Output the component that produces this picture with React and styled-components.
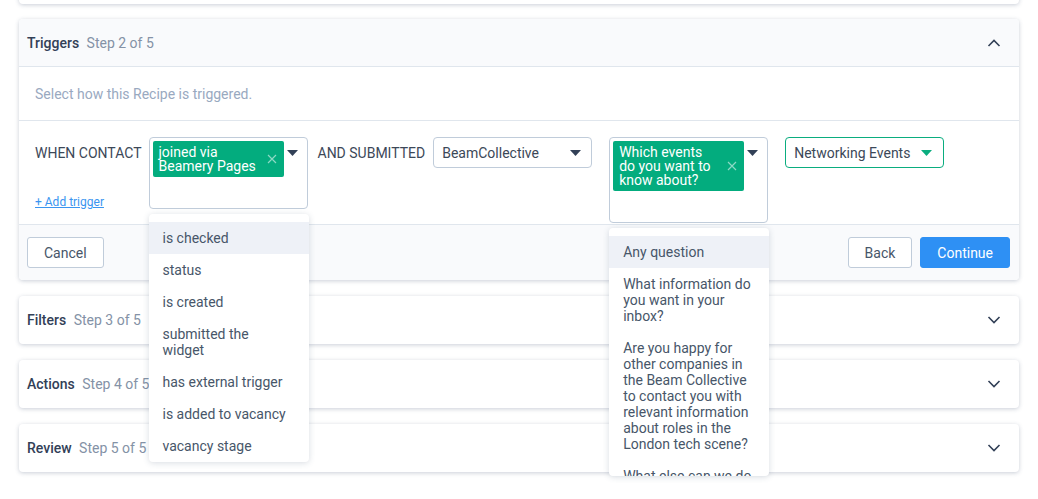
import React from "react";
import styled, { createGlobalStyle, css } from "styled-components";

const GlobalStyle = createGlobalStyle`
  body {
    margin: 0;
    background: #ffffff;
    font-family: Roboto, "Liberation Sans", sans-serif;
    color: #3c4858;
  }
  * {
    box-sizing: border-box;
  }
`;

const triggerOptions = [
  "is checked",
  "status",
  "is created",
  "submitted the widget",
  "has external trigger",
  "is added to vacancy",
  "vacancy stage",
];

const questionOptions = [
  "Any question",
  "What information do you want in your inbox?",
  "Are you happy for other companies in the Beam Collective to contact you with relevant information about roles in the London tech scene?",
  "What else can we do for you?",
];

const steps = [
  { title: "Filters", step: 3 },
  { title: "Actions", step: 4 },
  { title: "Review", step: 5 },
];

const Caret = ({ color = "#324057" }) => (
  <svg width="11" height="6" viewBox="0 0 11 6">
    <path d="M0 0 L11 0 L5.5 6 Z" fill={color} />
  </svg>
);

const Chevron = ({ up }) => (
  <svg width="14" height="8" viewBox="0 0 14 8">
    <path
      d={up ? "M1.5 7 L7 1.5 L12.5 7" : "M1.5 1 L7 6.5 L12.5 1"}
      fill="none"
      stroke="#324057"
      strokeWidth="1.6"
    />
  </svg>
);

const Cross = () => (
  <svg width="10" height="10" viewBox="0 0 10 10">
    <path d="M1 1 L9 9 M9 1 L1 9" stroke="rgba(255,255,255,0.55)" strokeWidth="1.2" />
  </svg>
);

const MultiSelect = ({ tag, options }) => (
  <MultiWrap>
    <MultiBox>
      <Tag>
        <TagText>{tag}</TagText>
        <Cross />
      </Tag>
      <MultiInput />
      <CaretSlot>
        <Caret />
      </CaretSlot>
    </MultiBox>
    <Menu>
      {options.map((o, i) => (
        <MenuItem key={o} $active={i === 0}>
          {o}
        </MenuItem>
      ))}
    </Menu>
  </MultiWrap>
);

const App = () => {
  return (
    <>
      <GlobalStyle />
      <Page>
        <PrevCard />
        <Card>
          <Header $open>
            <HeaderTitle>
              Triggers <StepText>Step 2 of 5</StepText>
            </HeaderTitle>
            <Chevron up />
          </Header>
          <Description>Select how this Recipe is triggered.</Description>
          <TriggerRow>
            <LabelColumn>
              <Label>WHEN CONTACT</Label>
              <AddLink href="#">+ Add trigger</AddLink>
            </LabelColumn>
            <MultiSelect tag="joined via Beamery Pages" options={triggerOptions} />
            <Label $gap>AND SUBMITTED</Label>
            <Select>
              <span>BeamCollective</span>
              <Caret />
            </Select>
            <Spacer />
            <MultiSelect
              tag="Which events do you want to know about?"
              options={questionOptions}
            />
            <Spacer />
            <Select $accent>
              <span>Networking Events</span>
              <Caret color="#0aad7f" />
            </Select>
          </TriggerRow>
          <Footer>
            <Button>Cancel</Button>
            <FooterRight>
              <Button>Back</Button>
              <Button $primary>Continue</Button>
            </FooterRight>
          </Footer>
        </Card>
        {steps.map((s) => (
          <Card key={s.title}>
            <Header>
              <HeaderTitle>
                {s.title} <StepText>Step {s.step} of 5</StepText>
              </HeaderTitle>
              <Chevron />
            </Header>
          </Card>
        ))}
      </Page>
    </>
  );
};

export default App;

const Page = styled.div`
  padding: 0 19px 30px;
  display: flex;
  flex-direction: column;
  gap: 16px;
`;

const Card = styled.div`
  background: #ffffff;
  border-radius: 4px;
  box-shadow: 0 1px 4px rgba(60, 80, 110, 0.28);
`;

const PrevCard = styled(Card)`
  height: 48px;
  margin-top: -44px;
  margin-bottom: -1px;
`;

const Header = styled.div`
  height: 48px;
  display: flex;
  align-items: center;
  justify-content: space-between;
  padding: 0 18px 0 8px;
  border-radius: 4px;
  ${(p) =>
    p.$open &&
    css`
      background: #f9fafc;
      border-bottom: 1px solid #e0e6ed;
      border-radius: 4px 4px 0 0;
    `}
`;

const HeaderTitle = styled.div`
  font-size: 14px;
  font-weight: 500;
  color: #324057;
`;

const StepText = styled.span`
  margin-left: 4px;
  font-weight: 400;
  color: #8492a6;
`;

const Description = styled.div`
  height: 54px;
  display: flex;
  align-items: center;
  padding: 0 16px;
  font-size: 14px;
  color: #99a9bf;
  border-bottom: 1px solid #e0e6ed;
`;

const TriggerRow = styled.div`
  height: 103px;
  display: flex;
  align-items: flex-start;
  gap: 8px;
  padding: 16px 16px 0;
`;

const LabelColumn = styled.div`
  display: flex;
  flex-direction: column;
  margin-right: -1px;
`;

const Label = styled.div`
  font-size: 14px;
  line-height: 31px;
  padding-top: 1px;
  color: #3c4858;
  white-space: nowrap;
  ${(p) => p.$gap && "margin-left: 2px;"}
`;

const AddLink = styled.a`
  margin-top: 26px;
  font-size: 12px;
  line-height: 14px;
  color: #3a95f0;
  text-decoration: underline;
`;

const Spacer = styled.div`
  width: 1px;
`;

const MultiWrap = styled.div`
  position: relative;
  width: 159px;
`;

const MultiBox = styled.div`
  position: relative;
  border: 1px solid #c0ccda;
  border-radius: 4px;
  padding: 3px 23px 0 3px;
  background: #ffffff;
`;

const Tag = styled.div`
  display: flex;
  align-items: center;
  justify-content: space-between;
  background: #03ac7e;
  border-radius: 2px;
  padding: 4px 7px 4px 6px;
  color: #ffffff;
  font-size: 14px;
  line-height: 14px;
`;

const TagText = styled.div`
  width: 98px;
`;

const MultiInput = styled.div`
  height: 31px;
`;

const CaretSlot = styled.div`
  position: absolute;
  top: 12px;
  right: 9px;
  display: flex;
`;

const Menu = styled.div`
  position: absolute;
  top: calc(100% + 5px);
  left: 0;
  width: 160px;
  height: 248px;
  overflow: hidden;
  padding-top: 8px;
  background: #ffffff;
  border-radius: 4px;
  box-shadow: 0 1px 6px rgba(60, 80, 110, 0.2);
  z-index: 5;
`;

const MenuItem = styled.div`
  padding: 8px 17px 8px 14px;
  font-size: 14px;
  line-height: 16px;
  color: #475669;
  background: ${(p) => (p.$active ? "#eef1f7" : "transparent")};
`;

const Select = styled.div`
  width: 159px;
  height: 31px;
  display: flex;
  align-items: center;
  justify-content: space-between;
  padding: 0 10px 0 8px;
  border: 1px solid ${(p) => (p.$accent ? "#0aad7f" : "#c0ccda")};
  border-radius: 4px;
  font-size: 14px;
  color: #3c4858;
  ${(p) => p.$accent && "padding-right: 11px;"}
`;

const Footer = styled.div`
  height: 56px;
  display: flex;
  align-items: center;
  justify-content: space-between;
  padding: 0 9px 0 8px;
  background: #f9fafc;
  border-top: 1px solid #e0e6ed;
  border-radius: 0 0 4px 4px;
`;

const FooterRight = styled.div`
  display: flex;
  gap: 8px;
`;

const Button = styled.button`
  height: 31px;
  padding: 0 16px;
  border-radius: 3px;
  font-family: Roboto, "Liberation Sans", sans-serif;
  font-size: 14px;
  cursor: pointer;
  border: 1px solid ${(p) => (p.$primary ? "#2e90f4" : "#c0ccda")};
  background: ${(p) => (p.$primary ? "#2e90f4" : "#ffffff")};
  color: ${(p) => (p.$primary ? "#ffffff" : "#475669")};
`;
